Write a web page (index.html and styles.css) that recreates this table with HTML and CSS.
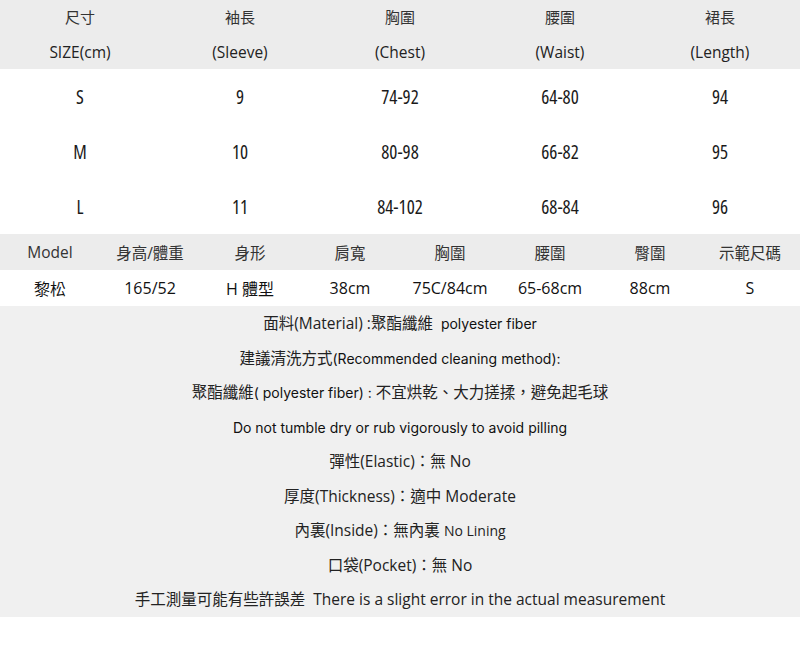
FILE: index.html
```html
<!DOCTYPE html>
<html lang="zh-Hant">
<head>
<meta charset="utf-8">
<link rel="stylesheet" href="styles.css">
</head>
<body>
<div class="page">
  <div class="size-head">
    <div class="hc"><span>尺寸</span><span>SIZE(cm)</span></div>
    <div class="hc"><span>袖長</span><span>(Sleeve)</span></div>
    <div class="hc"><span>胸圍</span><span>(Chest)</span></div>
    <div class="hc"><span>腰圍</span><span>(Waist)</span></div>
    <div class="hc"><span>裙長</span><span>(Length)</span></div>
  </div>
  <div class="size-body">
    <div>S</div><div>9</div><div>74-92</div><div>64-80</div><div>94</div>
    <div>M</div><div>10</div><div>80-98</div><div>66-82</div><div>95</div>
    <div>L</div><div>11</div><div>84-102</div><div>68-84</div><div>96</div>
  </div>
  <div class="model-head">
    <div>Model</div><div>身高/體重</div><div>身形</div><div>肩寬</div><div>胸圍</div><div>腰圍</div><div>臀圍</div><div>示範尺碼</div>
  </div>
  <div class="model-row">
    <div>黎松</div><div>165/52</div><div>H 體型</div><div>38cm</div><div>75C/84cm</div><div>65-68cm</div><div>88cm</div><div>S</div>
  </div>
  <div class="info">
    <p>面料(Material) :聚酯纖維 <span class="sm">&nbsp;polyester fiber</span></p>
    <p>建議清洗方式<span class="sm">(Recommended cleaning method):</span></p>
    <p>聚酯纖維<span class="sm">( polyester fiber) :</span> 不宜烘乾、大力搓揉，避免起毛球</p>
    <p><span class="sm">Do not tumble dry or rub vigorously to avoid pilling</span></p>
    <p>彈性(Elastic)：無 No</p>
    <p>厚度(Thickness)：適中 Moderate</p>
    <p>內裏(Inside)：無內裏 <span class="sm2">No Lining</span></p>
    <p>口袋(Pocket)：無 No</p>
    <p>手工測量可能有些許誤差&nbsp; There is a slight error in the actual measurement</p>
  </div>
</div>
</body>
</html>
```
FILE: styles.css
```css
html, body {
  margin: 0;
  padding: 0;
  background: #ffffff;
}
body {
  font-family: "Open Sans", "Noto Sans CJK TC", sans-serif;
  font-size: 15.5px;
  color: #222222;
}
.page {
  width: 800px;
}
.size-head {
  display: grid;
  grid-template-columns: repeat(5, 1fr);
  background: #ececec;
  height: 69px;
}
.hc {
  display: flex;
  flex-direction: column;
  align-items: center;
}
.hc span {
  height: 34.5px;
  line-height: 34.5px;
}
.hc span:first-child {
  font-size: 15px;
  color: #333;
}
.size-body {
  display: grid;
  grid-template-columns: repeat(5, 1fr);
  grid-auto-rows: 55px;
  font-family: "Open Sans", sans-serif;
  font-stretch: 80%;
  font-size: 19px;
  color: #1a1a1a;
}
.size-body div {
  display: flex;
  align-items: center;
  justify-content: center;
}
.model-head, .model-row {
  display: grid;
  grid-template-columns: repeat(8, 1fr);
  height: 36px;
}
.model-head {
  background: #ececec;
}
.model-head div, .model-row div {
  display: flex;
  align-items: center;
  justify-content: center;
}
.model-head div {
  color: #333;
}
.model-row div {
  color: #111;
  font-size: 16px;
}
.info {
  background: #f0f0f0;
  padding: 0;
}
.info p {
  margin: 0;
  height: 34.5px;
  line-height: 34.5px;
  text-align: center;
  color: #222;
}
.info .sm {
  font-family: "Inter", "Noto Sans CJK TC", sans-serif;
  font-size: 14px;
  color: #111;
}
.info .sm2 {
  font-size: 14px;
}
```
